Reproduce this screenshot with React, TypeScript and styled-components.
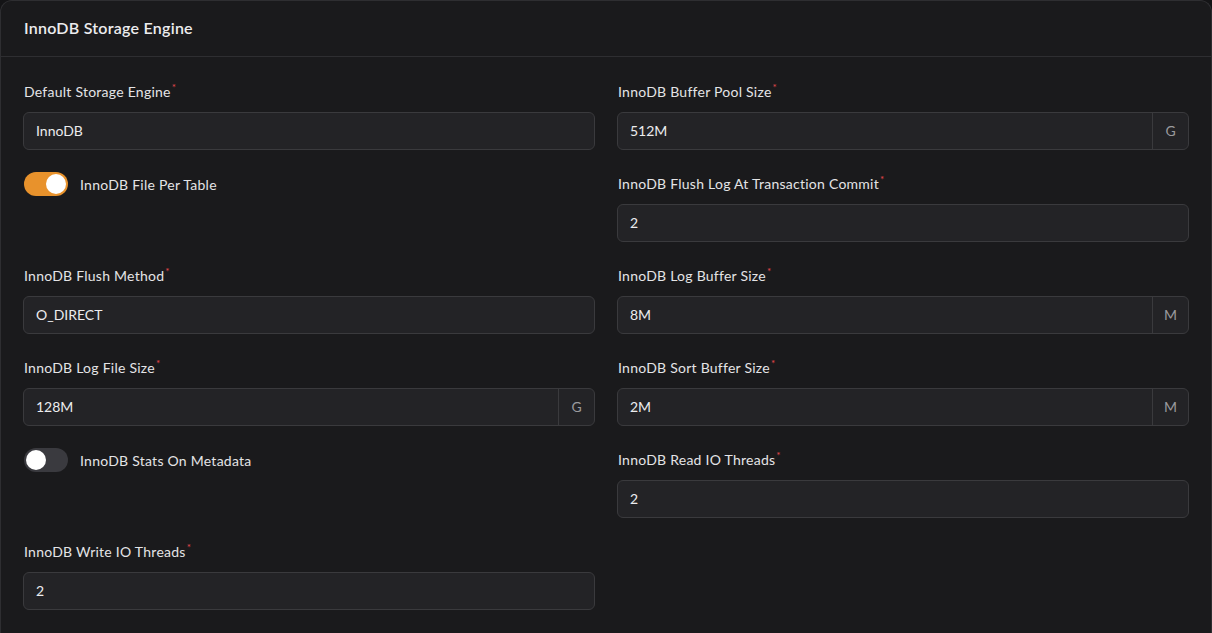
import React from "react";
import styled, { createGlobalStyle } from "styled-components";

const Global = createGlobalStyle`
  html, body { margin: 0; padding: 0; background: #141416; }
  body { font-family: Lato, "Noto Sans", sans-serif; -webkit-font-smoothing: antialiased; }
  * { box-sizing: border-box; }
`;

const Card = styled.div`
  width: 1212px;
  height: 633px;
  background: #1a1a1c;
  border: 1px solid #2e2e31;
  border-bottom: none;
  border-radius: 12px 12px 0 0;
  display: flex;
  flex-direction: column;
  overflow: hidden;
`;

const Header = styled.div`
  height: 56px;
  flex: 0 0 56px;
  display: flex;
  align-items: center;
  padding: 0 23px 2px 23px;
  border-bottom: 1px solid #2e2e31;
`;

const Title = styled.h2`
  margin: 0;
  font-size: 16px;
  font-weight: 600;
  color: #ececee;
  letter-spacing: 0.25px;
`;

const Body = styled.div`
  display: grid;
  grid-template-columns: 1fr 1fr;
  column-gap: 22px;
  row-gap: 22px;
  padding: 23px 22px 0 22px;
  align-items: start;
`;

const Field = styled.div`
  display: flex;
  flex-direction: column;
  gap: 9px;
`;

const Label = styled.label`
  height: 23px;
  display: flex;
  align-items: center;
  padding-left: 1px;
  padding-bottom: 1px;
  font-size: 14px;
  letter-spacing: 0.25px;
  color: #e4e4e6;
`;

const Req = styled.span`
  color: #e5484d;
  font-size: 10px;
  align-self: flex-start;
  margin-top: 1px;
  margin-left: 1px;
`;

const InputBox = styled.div`
  height: 38px;
  display: flex;
  align-items: stretch;
  background: #232326;
  border: 1px solid #3a3a3d;
  border-radius: 6px;
  overflow: hidden;
`;

const Value = styled.div`
  flex: 1;
  display: flex;
  align-items: center;
  padding: 0 12px 1px 12px;
  font-size: 14px;
  color: #ececee;
`;

const Suffix = styled.div`
  width: 36px;
  display: flex;
  align-items: center;
  justify-content: center;
  padding-bottom: 1px;
  border-left: 1px solid #3a3a3d;
  color: #9a9a9e;
  font-size: 14px;
`;

const ToggleRow = styled.div`
  display: flex;
  align-items: center;
  gap: 12px;
  height: 24px;
  padding-left: 1px;
`;

const Track = styled.div<{ $on: boolean }>`
  width: 44px;
  height: 24px;
  border-radius: 12px;
  background: ${(p) => (p.$on ? "#e8922c" : "#3a3a3f")};
  padding: 2px;
  display: flex;
  justify-content: ${(p) => (p.$on ? "flex-end" : "flex-start")};
`;

const Thumb = styled.div`
  width: 20px;
  height: 20px;
  border-radius: 50%;
  background: #ffffff;
`;

const ToggleLabel = styled.span`
  font-size: 14px;
  letter-spacing: 0.25px;
  color: #e4e4e6;
`;

type F =
  | { kind: "field"; label: string; value: string; suffix?: string }
  | { kind: "toggle"; label: string; on: boolean };

const items: F[] = [
  { kind: "field", label: "Default Storage Engine", value: "InnoDB" },
  { kind: "field", label: "InnoDB Buffer Pool Size", value: "512M", suffix: "G" },
  { kind: "toggle", label: "InnoDB File Per Table", on: true },
  { kind: "field", label: "InnoDB Flush Log At Transaction Commit", value: "2" },
  { kind: "field", label: "InnoDB Flush Method", value: "O_DIRECT" },
  { kind: "field", label: "InnoDB Log Buffer Size", value: "8M", suffix: "M" },
  { kind: "field", label: "InnoDB Log File Size", value: "128M", suffix: "G" },
  { kind: "field", label: "InnoDB Sort Buffer Size", value: "2M", suffix: "M" },
  { kind: "toggle", label: "InnoDB Stats On Metadata", on: false },
  { kind: "field", label: "InnoDB Read IO Threads", value: "2" },
  { kind: "field", label: "InnoDB Write IO Threads", value: "2" },
];

export default function App() {
  return (
    <>
      <Global />
      <Card>
        <Header>
          <Title>InnoDB Storage Engine</Title>
        </Header>
        <Body>
          {items.map((it, i) =>
            it.kind === "field" ? (
              <Field key={i}>
                <Label>
                  {it.label}
                  <Req>*</Req>
                </Label>
                <InputBox>
                  <Value>{it.value}</Value>
                  {it.suffix && <Suffix>{it.suffix}</Suffix>}
                </InputBox>
              </Field>
            ) : (
              <ToggleRow key={i}>
                <Track $on={it.on}>
                  <Thumb />
                </Track>
                <ToggleLabel>{it.label}</ToggleLabel>
              </ToggleRow>
            )
          )}
        </Body>
      </Card>
    </>
  );
}
